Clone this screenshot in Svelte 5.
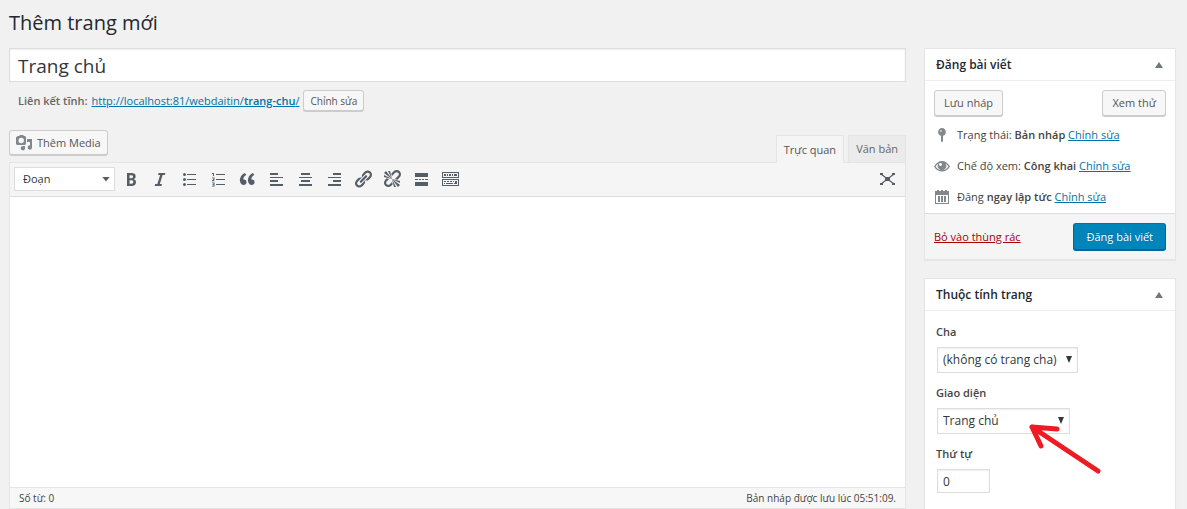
<script lang="ts">
	let title = $state('Trang chủ');
	let content = $state('');
	let mode = $state<'visual' | 'text'>('visual');
	let format = $state('p');
	let parent = $state('');
	let template = $state('home');
	let order = $state('0');
	let publishOpen = $state(true);
	let attributesOpen = $state(true);

	let wordCount = $derived(content.trim() ? content.trim().split(/\s+/).length : 0);

	const tools = [
		{
			label: 'Đậm',
			path: 'M6 4v13h4.54c1.37 0 2.46-.33 3.26-1 .8-.66 1.2-1.58 1.2-2.77 0-.84-.17-1.51-.51-2.01s-.9-.85-1.67-1.03v-.09c.57-.1 1.02-.4 1.36-.9s.51-1.13.51-1.91c0-1.14-.39-1.98-1.17-2.5C12.75 4.26 11.5 4 9.78 4H6zm2.57 5.15V6.26h1.36c.73 0 1.27.11 1.61.32.34.22.51.58.51 1.07 0 .54-.16.92-.47 1.15s-.82.35-1.51.35h-1.5zm0 2.19h1.6c1.44 0 2.16.53 2.16 1.61 0 .6-.17 1.05-.51 1.34s-.86.43-1.57.43H8.57v-3.38z'
		},
		{ label: 'Nghiêng', path: 'M14.78 6h-2.13l-2.8 9h2.12l-.62 2H4.6l.62-2h2.14l2.8-9H8.03l.62-2h6.75z' },
		{
			label: 'Danh sách dấu chấm',
			path: 'M5.500 4a1.500 1.500 0 1 1 0 3 1.500 1.500 0 0 1 0-3zM5.500 9a1.500 1.500 0 1 1 0 3 1.500 1.500 0 0 1 0-3zM5.500 14a1.500 1.500 0 1 1 0 3 1.500 1.500 0 0 1 0-3zM8 5h9v1H8zM8 10h9v1H8zM8 15h9v1H8z'
		},
		{
			label: 'Danh sách số',
			path: 'M4 4h2v3H5V5H4zM4 8.500h2.500v2L5.500 11.500h1v.8H4v-.8l1.500-1.500v-.7H4zM4 13.500h2.500v4H4v-.8h1.500v-.8H4.500v-.7h1v-.9H4zM8 5h9v1H8zM8 10h9v1H8zM8 15h9v1H8z'
		},
		{
			label: 'Trích dẫn',
			path: 'M9.49 13.22c0-.74-.2-1.38-.61-1.9-.62-.78-1.83-.88-2.53-.72-.29-1.65 1.11-3.75 2.92-4.65L7.88 4c-2.73 1.3-5.42 4.28-4.96 8.05C3.21 14.43 4.59 16 6.54 16c.85 0 1.56-.25 2.12-.75s.83-1.18.83-2.03zm8.05 0c0-.74-.2-1.38-.61-1.9-.63-.78-1.83-.88-2.53-.72-.29-1.65 1.11-3.75 2.92-4.65L15.93 4c-2.73 1.3-5.41 4.28-4.95 8.05.29 2.38 1.66 3.95 3.61 3.95.85 0 1.56-.25 2.12-.75s.83-1.18.83-2.03z'
		},
		{ label: 'Căn trái', path: 'M4 4h8v2H4zM4 8h13v1H4zM4 11h8v2H4zM4 15h13v2H4z' },
		{ label: 'Căn giữa', path: 'M6 4h9v2H6zM4 8h13v1H4zM6 11h9v2H6zM4 15h13v2H4z' },
		{ label: 'Căn phải', path: 'M9 4h8v2H9zM4 8h13v1H4zM9 11h8v2H9zM4 15h13v2H4z' },
		{
			label: 'Chèn liên kết',
			path: 'M17.74 2.76c1.68 1.69 1.68 4.41 0 6.1l-1.53 1.52c-1.12 1.12-2.7 1.47-4.14 1.09l2.62-2.61.76-.77.76-.76c.84-.84.84-2.2 0-3.04-.84-.85-2.2-.85-3.04 0l-.77.76-3.38 3.38c-.37-1.44-.02-3.02 1.1-4.14l1.52-1.53c1.69-1.68 4.42-1.68 6.1 0zM8.59 13.43l5.34-5.34c.42-.42.42-1.1 0-1.52-.44-.43-1.13-.39-1.53 0l-5.33 5.34c-.42.42-.42 1.1 0 1.52.44.43 1.13.39 1.52 0zm-.76 2.29l4.14-4.15c.38 1.44.03 3.02-1.09 4.14l-1.52 1.53c-1.69 1.68-4.41 1.68-6.1 0-1.68-1.68-1.68-4.42 0-6.1l1.53-1.52c1.12-1.12 2.7-1.47 4.14-1.1l-4.14 4.15c-.85.84-.85 2.2 0 3.05.84.84 2.2.84 3.04 0z'
		},
		{
			label: 'Bỏ liên kết',
			path: 'M17.74 2.26c1.68 1.69 1.68 4.41 0 6.1l-1.53 1.52c-.32.33-.69.58-1.08.77L13 10l1.69-1.64.76-.77.76-.76c.84-.84.84-2.2 0-3.04-.84-.85-2.2-.85-3.04 0l-.77.76-.76.76L10 7l-.65-2.14c.19-.38.44-.75.77-1.07l1.52-1.53c1.69-1.68 4.42-1.68 6.1 0zM2 4l8 6-6-8zm4-2l4 8-2-8H6zM2 6l8 4-8-2V6zm7.36 7.69L10 13l.74 2.35-1.38 1.39c-1.69 1.68-4.41 1.68-6.1 0-1.68-1.68-1.68-4.42 0-6.1l1.39-1.38L7 10l-.69.64-1.52 1.53c-.85.84-.85 2.2 0 3.04.84.85 2.2.85 3.04 0zM18 16l-8-6 6 8zm-4 2l-4-8 2 8h2zm4-4l-8-4 8 2v2z'
		},
		{ label: 'Chèn thẻ đọc tiếp', path: 'M4 4h13v4H4zM4 10h3v1H4zM8 10h2v1H8zM11 10h2v1h-2zM14 10h3v1h-3zM4 13h13v4H4z' },
		{
			label: 'Bật/tắt thanh công cụ',
			path: 'M2 3h17v6H2zM3 4v4h15V4zM4 5h2v2H4zM7 5h1v2H7zM9 5h2v2H9zM12 5h1v2h-1zM14 5h3v2h-3zM2 10h17v7H2zM3 11v5h15v-5zM4 12h2v1H4zM7 12h2v1H7zM10 12h2v1h-2zM13 12h1v1h-1zM15 12h2v3h-3v-1h1zM4 14h1v1H4zM6 14h7v1H6z'
		}
	];
</script>

{#snippet postboxHeader(heading: string, open: boolean, toggle: () => void)}
	<header class="postbox-header">
		<h2>{heading}</h2>
		<button type="button" class="toggle" aria-expanded={open} aria-label="Đóng/mở {heading}" onclick={toggle}>
			<svg viewBox="0 0 8 6" width="8" height="6"><path d="M4 0l4 6H0z" /></svg>
		</button>
	</header>
{/snippet}

<div class="wrap">
	<h1>Thêm trang mới</h1>

	<div class="columns">
		<main>
			<input class="title" type="text" aria-label="Tiêu đề" bind:value={title} />

			<div class="permalink">
				<strong>Liên kết tĩnh:</strong>
				<a href="http://localhost:81/webdaitin/trang-chu/">http://localhost:81/webdaitin/<b>trang-chu</b>/</a>
				<button type="button" class="button small">Chỉnh sửa</button>
			</div>

			<div class="editor-tools">
				<button type="button" class="button media">
					<svg viewBox="0 0 16 16" width="16" height="16">
						<path
							fill-rule="evenodd"
							d="M1 1.500L2 1h1l1-1h3l1 1h1l1 1v7l-1 1H1L0 9V2.500zM5.200 2.800a2.700 2.700 0 1 0 0 5.400 2.700 2.700 0 0 0 0-5.400zM11 4h5v8.500a2.200 2.200 0 1 1-2-2.200V7h-3zM9 11v2.700A2.200 2.200 0 1 1 7.300 11z"
						/>
					</svg>
					Thêm Media
				</button>
				<div class="tabs">
					<button type="button" class:active={mode === 'visual'} onclick={() => (mode = 'visual')}>Trực quan</button>
					<button type="button" class:active={mode === 'text'} onclick={() => (mode = 'text')}>Văn bản</button>
				</div>
			</div>

			<div class="editor">
				<div class="toolbar" role="toolbar" aria-label="Định dạng">
					<span class="select format">
						<select aria-label="Kiểu đoạn" bind:value={format}>
							<option value="p">Đoạn</option>
							<option value="h1">Tiêu đề 1</option>
							<option value="h2">Tiêu đề 2</option>
						</select>
					</span>
					{#each tools as tool}
						<button type="button" class="tool" aria-label={tool.label}>
							<svg viewBox="0 0 20 20" width="20" height="20"><path fill-rule="evenodd" d={tool.path} /></svg>
						</button>
					{/each}
					<button type="button" class="tool fullscreen" aria-label="Toàn màn hình">
						<svg viewBox="0 0 20 20" width="20" height="20">
							<path d="M8 8h5v4H8zM3 4h3v2H3zM15 4h3v2h-3zM3 14h3v2H3zM15 14h3v2h-3z" />
							<path d="M4 5l13 10M17 5L4 15" fill="none" stroke="currentColor" stroke-width="1.200" />
						</svg>
					</button>
				</div>
				<textarea aria-label="Nội dung" bind:value={content}></textarea>
				<div class="status">
					<span>Số từ: {wordCount}</span>
					<span>Bản nháp được lưu lúc 05:51:09.</span>
				</div>
			</div>
		</main>

		<aside>
			<section class="postbox">
				{@render postboxHeader('Đăng bài viết', publishOpen, () => (publishOpen = !publishOpen))}
				{#if publishOpen}
					<div class="minor">
						<div class="actions">
							<button type="button" class="button">Lưu nháp</button>
							<button type="button" class="button">Xem thử</button>
						</div>
						<ul>
							<li>
								<svg viewBox="0 0 16 16" width="16" height="16">
									<path d="M8 1a4 4 0 0 1 1 7.800V14l-1 1.500L7 14V8.800A4 4 0 0 1 8 1z" />
									<circle cx="7" cy="4" r="1" fill="#cfd2d4" />
								</svg>
								<span>Trạng thái: <b>Bản nháp</b> <a href="#status">Chỉnh sửa</a></span>
							</li>
							<li>
								<svg viewBox="0 0 16 16" width="16" height="16">
									<path
										fill-rule="evenodd"
										d="M0 8.500C2 5 4.800 3 8 3s6 2 8 5.500C14 12 11.200 13.500 8 13.500S2 12 0 8.500zm1.600 0C3 10.800 5.200 12.200 8 12.200s5-1.400 6.400-3.700C13.500 7 12.500 6 11.200 5.200a4.200 4.200 0 1 1-6.400 0C3.500 6 2.500 7 1.600 8.500z"
									/>
									<circle cx="6.500" cy="6.500" r="1.400" fill="#fff" />
								</svg>
								<span>Chế độ xem: <b>Công khai</b> <a href="#visibility">Chỉnh sửa</a></span>
							</li>
							<li>
								<svg viewBox="0 0 16 16" width="16" height="16">
									<path
										fill-rule="evenodd"
										d="M1 2h2V1h2v1h2V1h2v1h2V1h2v1h2v3H1zM1 5h14v10H1zM2 6v8h12V6zM4 7h2v6H4zM7 7h2v6H7zM10 7h2v6h-2z"
									/>
								</svg>
								<span>Đăng <b>ngay lập tức</b> <a href="#timestamp">Chỉnh sửa</a></span>
							</li>
						</ul>
					</div>
					<footer>
						<a class="trash" href="#trash">Bỏ vào thùng rác</a>
						<button type="button" class="button primary">Đăng bài viết</button>
					</footer>
				{/if}
			</section>

			<section class="postbox">
				{@render postboxHeader('Thuộc tính trang', attributesOpen, () => (attributesOpen = !attributesOpen))}
				{#if attributesOpen}
					<div class="fields">
						<label for="parent">Cha</label>
						<span class="select">
							<select id="parent" bind:value={parent}>
								<option value="">(không có trang cha)</option>
							</select>
						</span>
						<label for="template">Giao diện</label>
						<span class="select template">
							<select id="template" bind:value={template}>
								<option value="home">Trang chủ</option>
								<option value="default">Giao diện mặc định</option>
							</select>
							<svg class="pointer" viewBox="0 0 74 52" width="74" height="52">
								<path d="M70 47L4 3L29 5M4 3L13 22" />
							</svg>
						</span>
						<label for="order">Thứ tự</label>
						<input id="order" type="text" bind:value={order} />
					</div>
				{/if}
			</section>
		</aside>
	</div>
</div>

<style>
	:global(body) {
		margin: 0;
		background: #f1f1f1;
	}

	.wrap {
		box-sizing: border-box;
		height: 100vh;
		overflow: hidden;
		display: flex;
		flex-direction: column;
		padding: 8px 11px 0 9px;
		font-family: 'Open Sans', 'Noto Sans', sans-serif;
		font-size: 11px;
		line-height: 18px;
		color: #444;
	}

	.wrap * {
		box-sizing: border-box;
	}

	h1 {
		margin: 0 0 10px;
		font-size: 20px;
		font-weight: 400;
		line-height: 30px;
		color: #23282d;
	}

	.columns {
		flex: 1;
		display: flex;
		gap: 18px;
		min-height: 0;
	}

	main {
		flex: 1;
		min-width: 0;
		display: flex;
		flex-direction: column;
	}

	aside {
		flex: 0 0 252px;
		display: flex;
		flex-direction: column;
		gap: 18px;
	}

	button,
	input,
	select,
	textarea {
		margin: 0;
		font: inherit;
		color: inherit;
	}

	svg {
		fill: currentColor;
		flex: none;
	}

	a {
		color: #0073aa;
	}

	b,
	strong {
		font-weight: 600;
	}

	.title {
		width: 100%;
		height: 34px;
		padding: 2px 8px 0;
		border: 1px solid #ddd;
		background: #fff;
		box-shadow: inset 0 1px 2px rgba(0, 0, 0, 0.07);
		font-size: 19px;
		color: #32373c;
	}

	.permalink {
		display: flex;
		align-items: center;
		gap: 4px;
		padding: 8px 9px 0;
		color: #666;
	}

	.button {
		display: flex;
		align-items: center;
		justify-content: center;
		height: 26px;
		padding: 0 9px;
		border: 1px solid #ccc;
		border-radius: 3px;
		background: #f7f7f7;
		box-shadow: 0 1px 0 #ccc;
		color: #555;
		white-space: nowrap;
		cursor: pointer;
	}

	.button.small {
		height: 21px;
		padding: 0 6px;
		font-size: 10px;
	}

	.button.media {
		height: 25px;
		padding: 0 6px;
		gap: 5px;
	}

	.button.media svg {
		color: #82878c;
	}

	.button.primary {
		height: 27px;
		padding: 0 12px;
		border-color: #0073aa #006799 #006799;
		background: #0085ba;
		box-shadow: 0 1px 0 #006799;
		color: #fff;
		text-shadow: 0 -1px 1px #006799;
	}

	.editor-tools {
		display: flex;
		justify-content: space-between;
		align-items: flex-start;
		margin-top: 19px;
	}

	.tabs {
		display: flex;
		gap: 4px;
		margin-top: 5px;
	}

	.tabs button {
		height: 27px;
		padding: 0 7px;
		border: 1px solid #e5e5e5;
		border-bottom: 0;
		background: #ebebeb;
		color: #666;
	}

	.tabs button.active {
		position: relative;
		height: 28px;
		margin-bottom: -1px;
		background: #f5f5f5;
		color: #555;
	}

	.editor {
		flex: 1;
		display: flex;
		flex-direction: column;
		min-height: 0;
		border: 1px solid #e5e5e5;
		background: #fff;
	}

	.toolbar {
		display: flex;
		align-items: center;
		height: 34px;
		padding: 0 4px 2px;
		border-bottom: 1px solid #ddd;
		background: #f5f5f5;
	}

	.tool {
		display: flex;
		align-items: center;
		justify-content: center;
		width: 29px;
		height: 26px;
		padding: 0;
		border: 0;
		background: none;
		color: #555d66;
		cursor: pointer;
	}

	.fullscreen {
		margin-left: auto;
	}

	.select {
		position: relative;
		display: flex;
		width: fit-content;
	}

	.select::after {
		content: '';
		position: absolute;
		top: 9px;
		right: 6px;
		width: 6px;
		height: 7px;
		background: #32373c;
		clip-path: polygon(0 0, 100% 0, 50% 100%);
		pointer-events: none;
	}

	select {
		appearance: none;
		width: 100%;
		height: 26px;
		padding: 0 20px 0 5px;
		border: 1px solid #ddd;
		border-radius: 0;
		background: #fff;
		box-shadow: inset 0 1px 2px rgba(0, 0, 0, 0.07);
		font-size: 12px;
		color: #32373c;
	}

	.format {
		width: 101px;
		margin-right: 1px;
	}

	.format select {
		height: 24px;
		padding: 0 18px 0 8px;
		box-shadow: none;
		font-size: 11px;
	}

	.format::after {
		top: 10px;
		right: 5px;
		width: 8px;
		height: 5px;
		background: #555d66;
	}

	textarea {
		flex: 1;
		min-height: 0;
		padding: 10px;
		border: 0;
		resize: none;
		background: #fff;
	}

	.status {
		display: flex;
		justify-content: space-between;
		padding: 1px 9px;
		border-top: 1px solid #e5e5e5;
		background: #f7f7f7;
		font-size: 10px;
	}

	.postbox {
		border: 1px solid #e5e5e5;
		background: #fff;
		box-shadow: 0 1px 1px rgba(0, 0, 0, 0.04);
	}

	.postbox-header {
		display: flex;
		align-items: center;
		justify-content: space-between;
		height: 32px;
		padding-left: 11px;
		border-bottom: 1px solid #eee;
	}

	h2 {
		margin: 0;
		font-size: 12px;
		font-weight: 600;
		color: #23282d;
	}

	.toggle {
		display: flex;
		align-items: center;
		justify-content: center;
		width: 32px;
		height: 32px;
		padding: 0;
		border: 0;
		background: none;
		color: #72777c;
		cursor: pointer;
	}

	.minor {
		padding: 9px 9px 7px;
	}

	.actions {
		display: flex;
		justify-content: space-between;
	}

	ul {
		display: flex;
		flex-direction: column;
		gap: 13px;
		margin: 10px 0 0;
		padding: 0;
		list-style: none;
	}

	li {
		display: flex;
		align-items: center;
		gap: 7px;
		white-space: nowrap;
	}

	li svg {
		color: #82878c;
	}

	footer {
		display: flex;
		align-items: center;
		justify-content: space-between;
		padding: 9px;
		border-top: 1px solid #ddd;
		background: #f5f5f5;
	}

	.trash {
		color: #a00;
	}

	.fields {
		display: flex;
		flex-direction: column;
		align-items: flex-start;
		padding: 12px 11px;
	}

	.fields label {
		margin-bottom: 6px;
		font-weight: 600;
	}

	.fields .select,
	.fields input {
		margin: 0 1px 11px;
	}

	.fields input {
		width: 53px;
		height: 24px;
		padding: 0 5px;
		border: 1px solid #ddd;
		box-shadow: inset 0 1px 2px rgba(0, 0, 0, 0.07);
		font-size: 12px;
		color: #32373c;
	}

	.template {
		width: 133px;
	}

	/* hand-drawn marker over the template drop-down */
	.pointer {
		position: absolute;
		top: 16px;
		left: 91px;
		fill: none;
		stroke: #ed1c24;
		stroke-width: 5;
		stroke-linecap: round;
		stroke-linejoin: round;
		pointer-events: none;
	}
</style>
